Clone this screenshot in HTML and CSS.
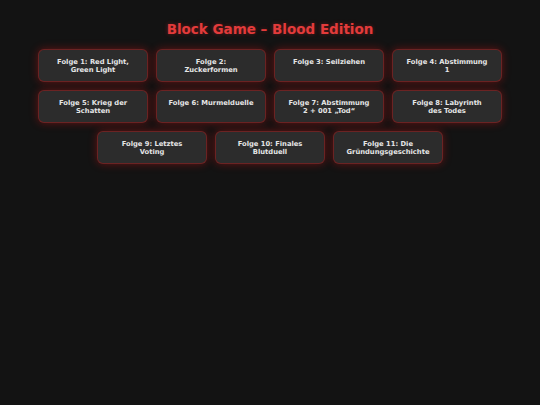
FILE: index.html
```html
<!DOCTYPE html>
<html lang="de">
<head>
  <meta charset="UTF-8" />
  <meta name="viewport" content="width=device-width, initial-scale=1.0"/>
  <title>Block Game – Blood Edition</title>
  <link rel="stylesheet" href="styles.css">
</head>
<body>
  <h1>Block Game – Blood Edition</h1>
  <main class="episodes">
    <div class="episode">Folge 1: Red Light, Green Light</div>
    <div class="episode">Folge 2: Zuckerformen</div>
    <div class="episode">Folge 3: Seilziehen</div>
    <div class="episode">Folge 4: Abstimmung 1</div>
    <div class="episode">Folge 5: Krieg der Schatten</div>
    <div class="episode episode-wide">Folge 6: Murmelduelle</div>
    <div class="episode">Folge 7: Abstimmung 2 + 001 „Tod“</div>
    <div class="episode">Folge 8: Labyrinth des Todes</div>
    <div class="episode">Folge 9: Letztes Voting</div>
    <div class="episode">Folge 10: Finales Blutduell</div>
    <div class="episode">Folge 11: Die Gründungsgeschichte</div>
  </main>
</body>
</html>
```

FILE: styles.css
```css
body {
  margin: 0;
  padding: 15px 0 20px;
  font-family: "DejaVu Sans", Verdana, sans-serif;
  background-color: #131313;
  color: #e6e6e6;
}

h1 {
  margin: 4px 0 10px;
  text-align: center;
  font-size: 13.5px;
  line-height: 20px;
  color: #e23b3b;
  text-shadow: 0 0 4px rgba(255, 40, 40, 0.35);
}

.episodes {
  display: flex;
  flex-wrap: wrap;
  justify-content: center;
  gap: 8px;
  max-width: 472px;
  margin: 0 auto;
}

.episode {
  box-sizing: border-box;
  width: 110px;
  padding: 7.5px 12px;
  background-color: #2c2c2c;
  border: 1px solid rgba(150, 30, 30, 0.6);
  border-radius: 6px;
  box-shadow: 0 0 8px rgba(200, 20, 20, 0.45);
  text-align: center;
  font-size: 6.75px;
  line-height: 8px;
  font-weight: bold;
}

.episode-wide {
  padding-left: 9px;
  padding-right: 9px;
}
```
